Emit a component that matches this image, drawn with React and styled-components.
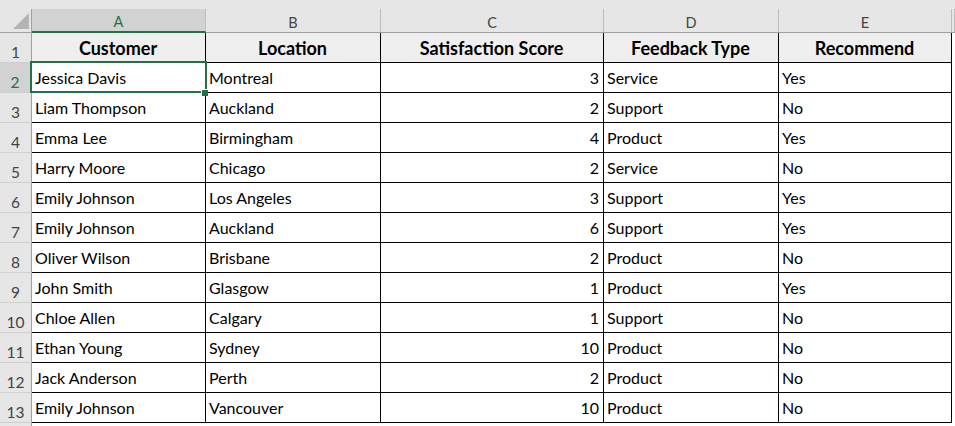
import React from "react";
import styled, { createGlobalStyle, css } from "styled-components";

const GREEN = "#217346";

const Global = createGlobalStyle`
  html, body { margin: 0; padding: 0; background: #ffffff; }
  body { overflow: hidden; font-family: Lato, "Liberation Sans", sans-serif; }
  #root { width: 955px; height: 426px; overflow: hidden; }
`;

const Sheet = styled.div`
  position: relative;
  display: grid;
  grid-template-columns: 32px 174px 175px 223px 175px 173px 1fr;
  grid-template-rows: 33px repeat(14, 30px);
  width: 955px;
  background: #ffffff;
  color: #000000;
`;

const HeaderCell = styled.div`
  box-sizing: border-box;
  height: 33px;
  padding-top: 9px;
  background: #e6e6e6;
  border-bottom: 1px solid ${(p) => (p.$active ? GREEN : "#a0a0a0")};
`;

const HeaderLabel = styled.div`
  box-sizing: border-box;
  height: 23px;
  display: flex;
  align-items: center;
  justify-content: center;
  padding-top: 3px;
  font-size: 14.5px;
  color: ${(p) => (p.$active ? GREEN : "#444444")};
  background: ${(p) => (p.$active ? "#d2d2d2" : "#e6e6e6")};
  border-right: 1px solid ${(p) => (p.$corner ? "#a0a0a0" : "#bdbdbd")};
  border-bottom: ${(p) => (p.$active ? `1px solid ${GREEN}` : "none")};
`;

const CornerLabel = styled(HeaderLabel)`
  justify-content: flex-end;
  align-items: flex-end;
  padding: 0 2px 3px 0;
`;

const RowNum = styled.div`
  box-sizing: border-box;
  display: flex;
  align-items: flex-end;
  justify-content: center;
  padding-bottom: 0;
  font-size: 15.5px;
  line-height: 19px;
  color: ${(p) => (p.$active ? GREEN : "#444444")};
  background: ${(p) => (p.$active ? "#d2d2d2" : "#e6e6e6")};
  border-right: ${(p) => (p.$active ? `2px solid ${GREEN}` : "1px solid #a0a0a0")};
  border-bottom: 1px solid #cfcfcf;
`;

const Cell = styled.div`
  box-sizing: border-box;
  display: flex;
  align-items: flex-end;
  padding: 0 4px 5px 3px;
  font-size: 16px;
  line-height: 19px;
  white-space: nowrap;
  overflow: hidden;
  background: #ffffff;
  border-right: 1px solid #000000;
  border-bottom: 1px solid #000000;
  justify-content: ${(p) => (p.$align === "right" ? "flex-end" : p.$align === "center" ? "center" : "flex-start")};
  ${(p) =>
    p.$head &&
    css`
      background: #efefef;
      font-weight: 700;
      font-size: 18px;
      line-height: 21px;
      padding-bottom: 3px;
    `}
`;

const EmptyCell = styled.div`
  background: #ffffff;
`;

const Selection = styled.div`
  position: absolute;
  left: 30px;
  top: 61px;
  width: 177px;
  height: 32px;
  box-sizing: border-box;
  border: 2px solid ${GREEN};
  pointer-events: none;
`;

const Handle = styled.div`
  position: absolute;
  left: 201px;
  top: 89px;
  width: 7px;
  height: 7px;
  box-sizing: border-box;
  background: ${GREEN};
  border-left: 1px solid #ffffff;
  border-top: 1px solid #ffffff;
`;

const columns = ["A", "B", "C", "D", "E"];
const headers = ["Customer", "Location", "Satisfaction Score", "Feedback Type", "Recommend"];
const rows = [
  ["Jessica Davis", "Montreal", 3, "Service", "Yes"],
  ["Liam Thompson", "Auckland", 2, "Support", "No"],
  ["Emma Lee", "Birmingham", 4, "Product", "Yes"],
  ["Harry Moore", "Chicago", 2, "Service", "No"],
  ["Emily Johnson", "Los Angeles", 3, "Support", "Yes"],
  ["Emily Johnson", "Auckland", 6, "Support", "Yes"],
  ["Oliver Wilson", "Brisbane", 2, "Product", "No"],
  ["John Smith", "Glasgow", 1, "Product", "Yes"],
  ["Chloe Allen", "Calgary", 1, "Support", "No"],
  ["Ethan Young", "Sydney", 10, "Product", "No"],
  ["Jack Anderson", "Perth", 2, "Product", "No"],
  ["Emily Johnson", "Vancouver", 10, "Product", "No"],
];

function CornerTriangle() {
  return (
    <svg width="16" height="16" viewBox="0 0 16 16">
      <polygon points="16,0 16,16 0,16" fill="#b4b4b4" />
    </svg>
  );
}

export default function App() {
  return (
    <>
      <Global />
      <Sheet>
        <HeaderCell>
          <CornerLabel $corner>
            <CornerTriangle />
          </CornerLabel>
        </HeaderCell>
        {columns.map((c, i) => (
          <HeaderCell key={c} $active={i === 0}>
            <HeaderLabel $active={i === 0}>{c}</HeaderLabel>
          </HeaderCell>
        ))}
        <HeaderCell>
          <HeaderLabel />
        </HeaderCell>

        <RowNum>1</RowNum>
        {headers.map((h) => (
          <Cell key={h} $head $align="center">
            {h}
          </Cell>
        ))}
        <EmptyCell />

        {rows.map((r, ri) => (
          <React.Fragment key={ri}>
            <RowNum $active={ri === 0}>{ri + 2}</RowNum>
            {r.map((v, ci) => (
              <Cell key={ci} $align={typeof v === "number" ? "right" : "left"}>
                {v}
              </Cell>
            ))}
            <EmptyCell />
          </React.Fragment>
        ))}

        <RowNum />
        <EmptyCell />
        <EmptyCell />
        <EmptyCell />
        <EmptyCell />
        <EmptyCell />
        <EmptyCell />

        <Selection />
        <Handle />
      </Sheet>
    </>
  );
}
